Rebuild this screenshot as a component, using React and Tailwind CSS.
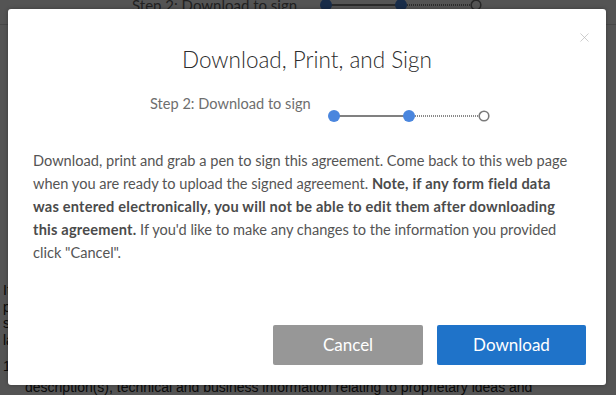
import { X } from "lucide-react";

function StepDots({ className = "" }) {
  return (
    <svg width="162" height="14" viewBox="0 0 162 14" className={className}>
      <line x1="6" y1="7" x2="81" y2="7" stroke="#808080" strokeWidth="2" />
      <line x1="81" y1="7" x2="151" y2="7" stroke="#8a8a8a" strokeWidth="2" strokeDasharray="1 1" />
      <circle cx="6" cy="7" r="6" fill="#4a86de" />
      <circle cx="81" cy="7" r="6" fill="#4a86de" />
      <circle cx="156" cy="7" r="4.8" fill="#fff" stroke="#7a7a7a" strokeWidth="1.6" />
    </svg>
  );
}

const pageLines = [
  "It is understood that the parties are entering into this agreement so that each party may",
  "provide the other with certain confidential information in order to evaluate a possible",
  "strategic relationship between them; and that such information shall be handled as set forth here",
  "later in this document and governed by the terms below.",
];

export default function App() {
  return (
    <div className="relative w-full h-screen overflow-hidden bg-white font-['Liberation_Sans',Arial,sans-serif] text-[#222]">
      {/* page behind the dialog */}
      <div className="flex items-start gap-[23px] pl-[132px] -mt-[5px] h-[30px] border-b border-[#d8d8d8]">
        <span className="text-[15px] leading-[20px] font-['Lato',sans-serif] text-[#666]">
          Step 2: Download to sign
        </span>
        <StepDots className="mt-[3px]" />
      </div>
      <div className="pt-[257px] pl-[3px] text-[14px] leading-[16.5px] whitespace-nowrap">
        {pageLines.map((l) => (
          <div key={l}>{l}</div>
        ))}
        <div className="mt-[10px]">1. Confidential Information includes, without limitation, any and all drawings,</div>
        <div className="pl-[22px] mt-[4px]">
          description(s), technical and business information relating to proprietary ideas and
        </div>
      </div>

      {/* overlay */}
      <div className="absolute inset-0 bg-black/[0.67]" />

      {/* dialog */}
      <div className="absolute left-[8px] top-[9px] w-[598px] h-[376px] bg-white rounded-[3px] shadow-[0_0_4px_rgba(0,0,0,0.3)] flex flex-col font-['Lato',sans-serif]">
        <button className="absolute right-[14px] top-[21px] text-[#b8b8b8]">
          <X size={15} strokeWidth={1.1} />
        </button>

        <h2 className="pt-[36px] text-center text-[22.5px] leading-[30px] font-light text-[#2c2c2c]">
          Download, Print, and Sign
        </h2>

        <div className="flex items-start pl-[142px] mt-[19px]">
          <span className="text-[14.6px] leading-[20px] text-[#6e6e6e]">Step 2: Download to sign</span>
          <StepDots className="ml-[17px] mt-[15px]" />
        </div>

        <p className="mt-[26px] pl-[25px] pr-[30px] text-[14.6px] leading-[23px] text-[#555]">
          Download, print and grab a pen to sign this agreement. Come back to this web page when
          you are ready to upload the signed agreement.{" "}
          <b className="font-bold tracking-[0.2px] text-[#4b4b4b]">
            Note, if any form field data was entered electronically, you will not be able to edit
            them after downloading this agreement.
          </b>{" "}
          If you'd like to make any changes to the information you provided click "Cancel".
        </p>

        <div className="mt-auto flex justify-end gap-[14px] pr-[20px] pb-[20px]">
          <button className="w-[150px] h-[40px] rounded-[2px] bg-[#979797] text-white text-[17px]">
            Cancel
          </button>
          <button className="w-[149px] h-[40px] rounded-[2px] bg-[#1f73c9] text-white text-[17px]">
            Download
          </button>
        </div>
      </div>
    </div>
  );
}
